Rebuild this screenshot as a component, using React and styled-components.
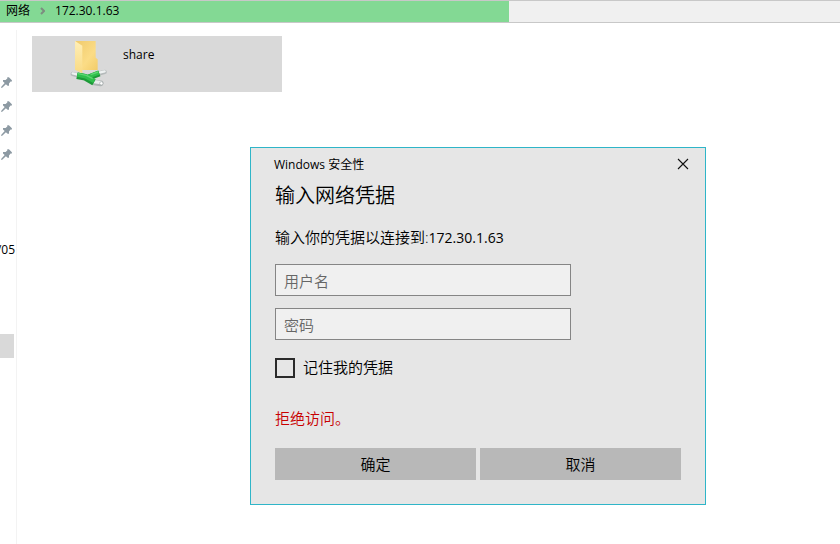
import React from "react";
import styled, { createGlobalStyle } from "styled-components";

const GlobalStyle = createGlobalStyle`
  *, *::before, *::after { box-sizing: border-box; }
  body {
    margin: 0;
    background: #fff;
    color: #000;
    font-family: "Open Sans", "Noto Sans CJK SC", sans-serif;
    font-size: 12px;
  }
  button, input { font-family: inherit; }
`;

const Explorer = styled.div`
  position: relative;
  display: flex;
  flex-direction: column;
  min-height: 100vh;
  overflow: hidden;
`;

const AddressBar = styled.nav`
  background: #f0f0f0;
  border-top: 1px solid #c8c8c8;
  border-bottom: 1px solid #c8c8c8;
`;

const LoadedPart = styled.div`
  display: flex;
  align-items: center;
  gap: 10px;
  width: 60.6%;
  height: 21px;
  padding: 0 0 2px 6px;
  background: #83d994;
  line-height: 18px;
`;

const Crumb = styled.a`
  color: #000;
  text-decoration: none;
`;

const Content = styled.div`
  display: flex;
  flex: 1;
  padding-top: 7px;
`;

const Sidebar = styled.aside`
  width: 17px;
  border-right: 1px solid #f3f3f3;
  overflow: hidden;
`;

const PinList = styled.ul`
  display: grid;
  grid-auto-rows: 24px;
  margin: 0;
  padding: 40px 0 0 1px;
  list-style: none;
`;

const PinItem = styled.li`
  display: flex;
  align-items: center;
`;

const SidebarLabel = styled.div`
  display: flex;
  justify-content: flex-end;
  width: 15px;
  margin-top: 72px;
  line-height: 24px;
`;

const SelectedRow = styled.div`
  width: 14px;
  height: 24px;
  margin-top: 72px;
  background: #d9d9d9;
`;

const Files = styled.main`
  flex: 1;
  padding: 6px 15px;
`;

const FileTile = styled.button`
  display: flex;
  align-items: flex-start;
  gap: 15px;
  width: 250px;
  height: 56px;
  padding: 4px 0 0 38px;
  border: 0;
  background: #d9d9d9;
  color: #000;
  font-size: 12px;
  text-align: left;
`;

const FileName = styled.span`
  padding-top: 6px;
  line-height: 18px;
`;

const Dialog = styled.section`
  position: absolute;
  top: 147px;
  left: 250px;
  width: 456px;
  padding: 6px 24px 24px;
  border: 1px solid #2fb5c8;
  background: #e6e6e6;
  font-weight: 350;
`;

const DialogBar = styled.header`
  display: flex;
  align-items: center;
  justify-content: space-between;
  height: 20px;
  margin: 0 -8px 0 -1px;
  font-weight: 400;
`;

const CloseButton = styled.button`
  display: flex;
  align-items: center;
  justify-content: center;
  width: 12px;
  height: 12px;
  padding: 0;
  border: 0;
  background: none;
`;

const Heading = styled.h1`
  margin: 6px 0 0;
  font-size: 20px;
  font-weight: 350;
  line-height: 32px;
`;

const Message = styled.p`
  margin: 14px 0 15px;
  font-size: 15px;
  line-height: 22px;
`;

const Address = styled.span`
  font-size: 14px;
  font-weight: 400;
`;

const Fields = styled.div`
  display: grid;
  gap: 12px;
  width: 296px;
`;

const Field = styled.input`
  width: 100%;
  height: 32px;
  padding: 1px 8px 0;
  border: 1px solid #858585;
  border-radius: 0;
  outline: 0;
  background: #f0f0f0;
  color: #000;
  font-size: 15px;
  font-weight: 350;

  &::placeholder {
    color: #666;
    opacity: 1;
  }
`;

const Remember = styled.label`
  display: flex;
  align-items: center;
  gap: 8px;
  margin-top: 16px;
  font-size: 15px;
  line-height: 22px;
`;

const RememberText = styled.span`
  padding-bottom: 2px;
`;

const Checkbox = styled.input`
  appearance: none;
  width: 20px;
  height: 20px;
  margin: 0;
  border: 2px solid #2b2b2b;

  &:checked {
    background: #2b2b2b;
  }
`;

const ErrorText = styled.p`
  margin: 27px 0 19px;
  color: #c80000;
  font-size: 15px;
  line-height: 22px;
`;

const Actions = styled.div`
  display: grid;
  grid-template-columns: 1fr 1fr;
  gap: 4px;
`;

const ActionButton = styled.button`
  height: 32px;
  padding: 0 0 2px;
  border: 0;
  background: #b8b8b8;
  color: #000;
  font-size: 15px;
  font-weight: 350;
`;

const Chevron = () => (
  <svg width="5" height="8" viewBox="0 0 5 8" fill="none" stroke="#7d8c80" strokeWidth="2" aria-hidden="true">
    <path d="M1 1l3 3-3 3" />
  </svg>
);

const Pin = () => (
  <svg width="11" height="11" viewBox="0 0 11 11" fill="#8d9aa3" aria-hidden="true">
    <path d="M6.3 0.2h1.6l3 3v1.4H9.6L8 6.4v2.4H6.6L4.9 7.3 1.2 10.8.2 10.9.3 9.8 3.7 6.1 2 4.4V3.1h2.6L6.3 1.5z" />
  </svg>
);

const SharedFolder = () => (
  <svg width="38" height="48" viewBox="30 30 114 144" aria-hidden="true">
    <defs>
      <linearGradient id="folderBack" x1="0" y1="0" x2="1" y2="1">
        <stop offset="0" stopColor="#f0ca6c" />
        <stop offset=".6" stopColor="#fbdc86" />
        <stop offset="1" stopColor="#f2cc69" />
      </linearGradient>
      <linearGradient id="folderFlap" x1="0" y1="0" x2="0" y2="1">
        <stop offset="0" stopColor="#ffefb8" />
        <stop offset="1" stopColor="#f9da83" />
      </linearGradient>
    </defs>
    <path d="M46 33H107V83L113 88V120H68L46 112Z" fill="url(#folderBack)" />
    <path d="M45 33L67 47V130L45 119Z" fill="url(#folderFlap)" />
    <g fill="none" strokeLinecap="round">
      <path d="M38 132L54 136M118 130L134 126" stroke="#b4baba" strokeWidth="13" />
      <path d="M38 130L54 134M118 128L134 124" stroke="#eef1f1" strokeWidth="7" />
      <path d="M102 157L122 160" stroke="#aeb4b4" strokeWidth="17" />
      <path d="M102 155L122 158" stroke="#e9eded" strokeWidth="10" />
    </g>
    <g fill="none" strokeLinejoin="round">
      <path d="M82 144L118 130" stroke="#1d9a38" strokeWidth="18" />
      <path d="M51 137L76 142 102 157" stroke="#1d9a38" strokeWidth="20" />
      <path d="M82 141L117 128" stroke="#30bf4d" strokeWidth="12" />
      <path d="M52 134L77 139 103 153" stroke="#30bf4d" strokeWidth="13" />
      <path d="M54 131L79 136 98 146M92 134L114 126" stroke="#5cd772" strokeWidth="4" />
    </g>
    <circle cx="124" cy="160" r="5" fill="#fff" stroke="#a4aaaa" strokeWidth="2" />
  </svg>
);

const Cross = () => (
  <svg width="12" height="12" viewBox="0 0 12 12" stroke="#111" strokeWidth="1.1" aria-hidden="true">
    <path d="M1 1l10 10M11 1L1 11" />
  </svg>
);

const pinnedItems = ["a", "b", "c", "d"];

export default function App() {
  return (
    <>
      <GlobalStyle />
      <Explorer>
        <AddressBar>
          <LoadedPart>
            <Crumb href="#network">网络</Crumb>
            <Chevron />
            <Crumb href="#host">172.30.1.63</Crumb>
          </LoadedPart>
        </AddressBar>
        <Content>
          <Sidebar>
            <PinList>
              {pinnedItems.map((id) => (
                <PinItem key={id}>
                  <Pin />
                </PinItem>
              ))}
            </PinList>
            <SidebarLabel>/05</SidebarLabel>
            <SelectedRow />
          </Sidebar>
          <Files>
            <FileTile type="button">
              <SharedFolder />
              <FileName>share</FileName>
            </FileTile>
          </Files>
        </Content>
        <Dialog role="dialog" aria-labelledby="credentials-heading">
          <DialogBar>
            <span>Windows 安全性</span>
            <CloseButton type="button" aria-label="关闭">
              <Cross />
            </CloseButton>
          </DialogBar>
          <Heading id="credentials-heading">输入网络凭据</Heading>
          <Message>
            输入你的凭据以连接到:<Address>172.30.1.63</Address>
          </Message>
          <Fields>
            <Field type="text" placeholder="用户名" aria-label="用户名" />
            <Field type="password" placeholder="密码" aria-label="密码" />
          </Fields>
          <Remember>
            <Checkbox type="checkbox" />
            <RememberText>记住我的凭据</RememberText>
          </Remember>
          <ErrorText role="alert">拒绝访问。</ErrorText>
          <Actions>
            <ActionButton type="button">确定</ActionButton>
            <ActionButton type="button">取消</ActionButton>
          </Actions>
        </Dialog>
      </Explorer>
    </>
  );
}
